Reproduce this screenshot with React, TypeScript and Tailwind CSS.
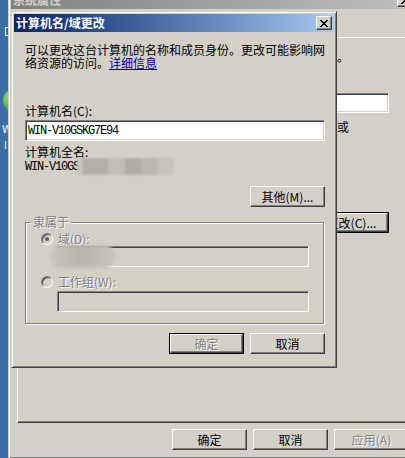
import React from 'react';

// classic 3D edges
const raised =
  'border border-t-white border-l-white border-b-[#404040] border-r-[#404040] shadow-[inset_-1px_-1px_0_#808080]';
const sunken =
  'border border-t-[#808080] border-l-[#808080] border-b-white border-r-white shadow-[inset_1px_1px_0_#404040,inset_-1px_-1px_0_#d4d0c8]';
const windowFrame =
  'border border-t-[#d4d0c8] border-l-[#d4d0c8] border-b-[#404040] border-r-[#404040] shadow-[inset_1px_1px_0_#fff,inset_-1px_-1px_0_#808080]';
const disabledText = 'text-[#808080] [text-shadow:1px_1px_0_#fff]';

const Button = ({
  children,
  isDefault,
  disabled,
  className = '',
}: {
  children: React.ReactNode;
  isDefault?: boolean;
  disabled?: boolean;
  className?: string;
}) => {
  const face = (
    <div
      className={`${raised} bg-[#d4d0c8] w-full h-full flex items-center justify-center leading-none whitespace-nowrap ${
        disabled ? disabledText : 'text-black'
      }`}
    >
      {children}
    </div>
  );
  return (
    <div className={`${isDefault ? 'border border-black' : ''} w-[75px] h-[21px] shrink-0 ${className}`}>
      {face}
    </div>
  );
};

const CaptionButton = () => (
  <div className={`${raised} bg-[#d4d0c8] w-[16px] h-[14px] shrink-0 flex items-center justify-center`}>
    <svg width="8" height="7" viewBox="0 0 8 7" shapeRendering="crispEdges">
      <path
        fill="#000"
        d="M0 0h2v1H0zM6 0h2v1H6zM1 1h2v1H1zM5 1h2v1H5zM2 2h4v1H2zM3 3h2v1H3zM2 4h4v1H2zM1 5h2v1H1zM5 5h2v1H5zM0 6h2v1H0zM6 6h2v1H6z"
      />
    </svg>
  </div>
);

const Radio = ({ checked }: { checked?: boolean }) => (
  <span className="w-[12px] h-[12px] shrink-0 rounded-full border border-t-[#808080] border-l-[#808080] border-b-white border-r-white bg-[#d4d0c8] shadow-[inset_1px_1px_0_#404040,inset_-1px_-1px_0_#d4d0c8] flex items-center justify-center">
    {checked && <span className="w-[4px] h-[4px] rounded-full bg-[#606060]" />}
  </span>
);

// the "系统属性" window behind; most of it is covered by the dialog
const SystemProperties = () => (
  <div className={`absolute left-[8px] top-[-12px] w-[410px] h-[471px] bg-[#d4d0c8] ${windowFrame} p-[2px] flex flex-col`}>
    <div className="h-[18px] shrink-0 flex items-center justify-between px-[2px] bg-linear-to-r from-[#808080] to-[#c0c0c0]">
      <span className="font-bold text-[#d4d0c8] leading-[18px]">系统属性</span>
      <CaptionButton />
    </div>
    <div className="flex-1 flex flex-col px-[6px] pt-[28px] pb-[6px]">
      <div className="flex-1 flex flex-col border-t border-l border-t-white border-l-white border-r border-b border-r-[#404040] border-b-[#404040] shadow-[inset_-1px_-1px_0_#808080] pl-[14px] pr-[19px]">
        <p className="mt-[12px] mr-[40px] text-right leading-[13px] whitespace-nowrap">。</p>
        <div className="mt-[30px] flex items-center pl-[96px]">
          <div className={`flex-1 h-[20px] bg-white ${sunken}`} />
        </div>
        <p className="mt-[7px] mr-[40px] text-right leading-[13px] whitespace-nowrap">或</p>
        <div className="mt-[79px] flex justify-end">
          <Button isDefault>更改(C)...</Button>
        </div>
      </div>
      <div className="mt-[6px] flex justify-end gap-[6px]">
        <Button>确定</Button>
        <Button>取消</Button>
        <Button disabled>应用(A)</Button>
      </div>
    </div>
  </div>
);

const redactBlocks = [
  { w: 'w-[6px]', c: 'bg-[#c9c5bd]' },
  { w: 'w-[25px]', c: 'bg-[#b4b0a9]' },
  { w: 'w-[17px]', c: 'bg-[#c3bfb7]' },
  { w: 'w-[16px]', c: 'bg-[#b1ada6]' },
  { w: 'w-[17px]', c: 'bg-[#bdb9b1]' },
  { w: 'w-[16px]', c: 'bg-[#c7c3bb]' },
];

const ComputerNameDialog = () => (
  <div className={`absolute left-[11px] top-[11px] w-[326px] h-[357px] bg-[#d4d0c8] ${windowFrame} p-[2px] flex flex-col`}>
    <div className="h-[18px] shrink-0 flex items-center justify-between px-[2px] bg-linear-to-r from-[#0a246a] to-[#a6caf0]">
      <span className="font-bold text-white leading-[18px]">计算机名/域更改</span>
      <CaptionButton />
    </div>
    <div className="flex flex-col pl-[11px] pr-[9px]">
      <p className="mt-[11px] leading-[13px]">
        <span className="block whitespace-nowrap">可以更改这台计算机的名称和成员身份。更改可能影响网</span>
        <span className="block whitespace-nowrap">
          络资源的访问。<span className="text-[#0000a0] underline">详细信息</span>
        </span>
      </p>
      <label className="mt-[35px] leading-[13px]">计算机名(C):</label>
      <div
        className={`mt-[3px] h-[21px] bg-white ${sunken} flex items-center pl-[2px] font-['Liberation_Mono',monospace] tracking-[-1.2px]`}
      >
        WIN-V10GSKG7E94
      </div>
      <div className="mt-[5px] leading-[12px]">计算机全名:</div>
      <div className="h-[17px] flex items-start">
        <span className="mt-[3px] leading-[12px] font-['Liberation_Mono',monospace] tracking-[-1.2px]">WIN-V10GS</span>
        <div className="ml-[-2px] flex h-[17px] blur-[1px]">
          {redactBlocks.map((b, i) => (
            <div key={i} className={`${b.w} ${b.c} h-full`} />
          ))}
        </div>
      </div>
      <Button className="mt-[11px] self-end">其他(M)...</Button>

      <div className="relative mt-[15px] w-[299px] h-[102px] border border-[#808080] shadow-[1px_1px_0_#fff,inset_1px_1px_0_#fff] pt-[10px] flex flex-col">
        <span className={`absolute left-[5px] top-[-8px] px-[2px] bg-[#d4d0c8] leading-[13px] ${disabledText}`}>
          隶属于
        </span>
        <div className="h-[12px] flex items-center gap-[5px] pl-[15px]">
          <Radio checked />
          <span className={`leading-[12px] ${disabledText}`}>域(D):</span>
        </div>
        <div className={`mt-[1px] ml-[31px] w-[252px] h-[21px] bg-[#d4d0c8] ${sunken}`} />
        <div className="mt-[9px] h-[12px] flex items-center gap-[5px] pl-[15px]">
          <Radio />
          <span className={`leading-[12px] ${disabledText}`}>工作组(W):</span>
        </div>
        <div className={`mt-[3px] ml-[31px] w-[252px] h-[21px] bg-[#d4d0c8] ${sunken}`} />
        {/* blurred-out domain name */}
        <div className="absolute left-[24px] top-[22px] w-[65px] h-[23px] rounded-[11px] bg-linear-to-r from-[#c8c4bc] via-[#b9b5ad] to-[#c9c5bd] blur-[1.5px]" />
      </div>

      <div className="mt-[9px] flex justify-end gap-[6px]">
        <Button isDefault disabled>
          确定
        </Button>
        <Button>取消</Button>
      </div>
    </div>
  </div>
);

export default function App() {
  return (
    <div className="relative w-[405px] h-[458px] overflow-hidden bg-[#3a6ea5] font-['Noto_Sans_CJK_SC',sans-serif] text-[12px] text-black">
      {/* desktop icons peeking out on the left */}
      <div className="absolute left-[5px] top-[27px] w-[3px] h-[9px] border-l border-t border-b border-white" />
      <div className="absolute left-[3px] top-[88px] w-[25px] h-[25px] rounded-full bg-[radial-gradient(circle_at_30%_40%,#9ee07a,#3f9f2c_60%,#1f6e1a)]" />
      <span className="absolute left-[2px] top-[124px] text-white text-[10px] leading-[12px] font-['DejaVu_Sans',sans-serif]">W</span>
      <span className="absolute left-[4px] top-[140px] text-white text-[10px] leading-[12px] font-['DejaVu_Sans',sans-serif]">I</span>

      <SystemProperties />
      <ComputerNameDialog />
    </div>
  );
}
